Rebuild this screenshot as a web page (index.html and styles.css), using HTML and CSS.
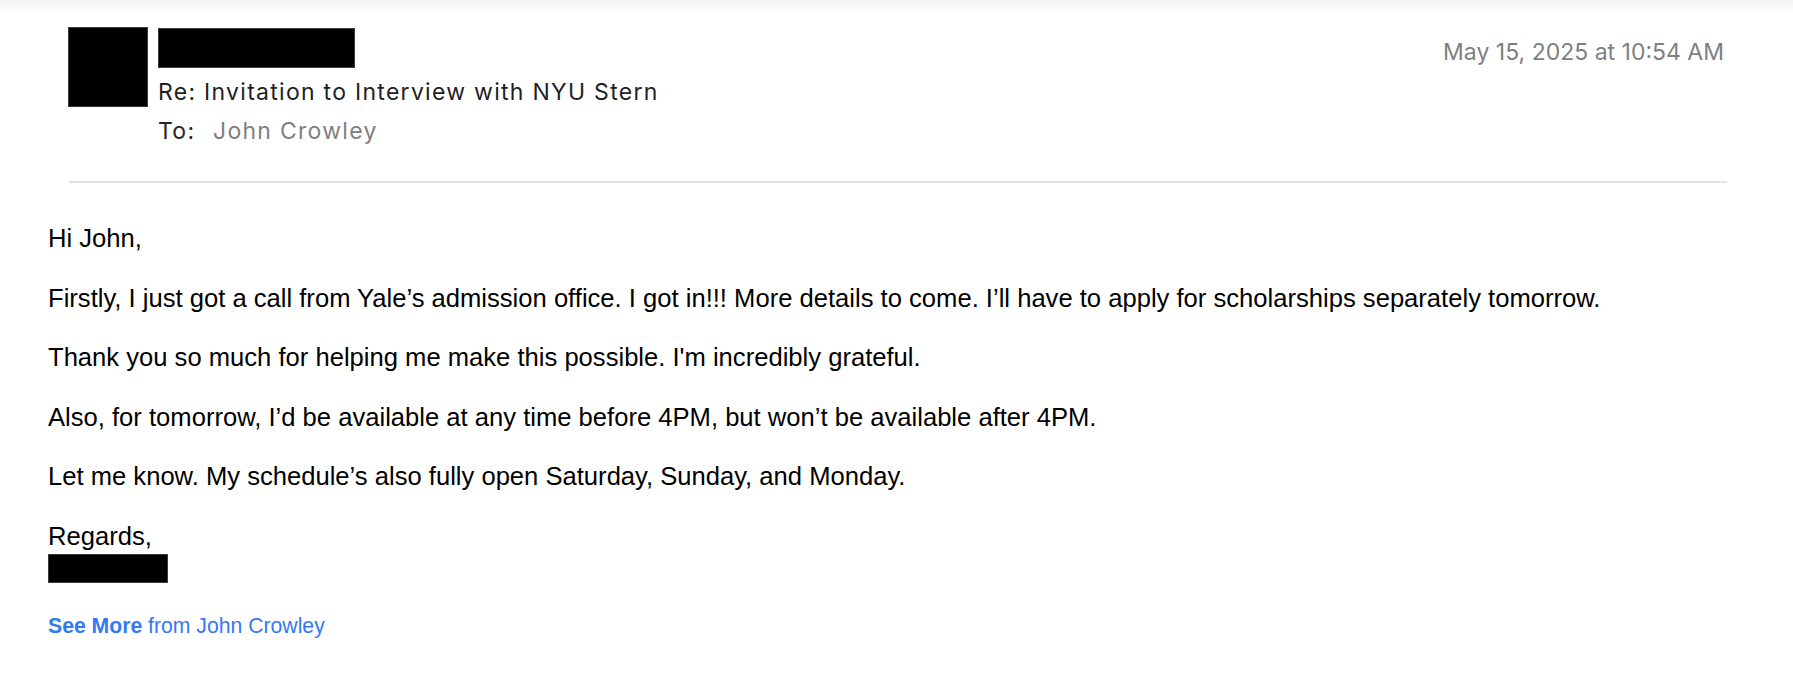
FILE: index.html
```html
<!DOCTYPE html>
<html>
<head>
<meta charset="utf-8">
<title>Re: Invitation to Interview with NYU Stern</title>
<link rel="stylesheet" href="styles.css">
</head>
<body>
<div class="topband"></div>
<header class="hdr">
  <div class="avatar"></div>
  <div class="meta">
    <div class="redact name"></div>
    <div class="subject">Re: Invitation to Interview with NYU Stern</div>
    <div class="to"><span class="lbl">To:</span><span class="rcpt">John Crowley</span></div>
  </div>
  <div class="date">May 15, 2025 at 10:54 AM</div>
</header>
<div class="sep"></div>
<main class="msg">
  <p>Hi John,</p>
  <p>Firstly, I just got a call from Yale’s admission office. I got in!!! More details to come. I’ll have to apply for scholarships separately tomorrow.</p>
  <p>Thank you so much for helping me make this possible. I'm incredibly grateful.</p>
  <p>Also, for tomorrow, I’d be available at any time before 4PM, but won’t be available after 4PM.</p>
  <p>Let me know. My schedule’s also fully open Saturday, Sunday, and Monday.</p>
  <div class="sign">
    <div class="regards">Regards,</div>
    <div class="redact signame"></div>
  </div>
  <div class="more"><span class="more-b">See More</span> from John Crowley</div>
</main>
</body>
</html>
```
FILE: styles.css
```css
html, body {
  margin: 0;
  padding: 0;
  background: #ffffff;
}
body {
  width: 1793px;
  height: 680px;
  overflow: hidden;
}
.topband {
  height: 13px;
  background: linear-gradient(#f4f4f4, #fafafa 70%, #ffffff);
}
.hdr {
  display: flex;
  align-items: flex-start;
  padding: 14px 69px 0 68px;
  font-family: Inter, "Liberation Sans", sans-serif;
  font-size: 23px;
  line-height: 30px;
  letter-spacing: 1.28px;
}
.avatar {
  width: 80px;
  height: 80px;
  background: #000;
  box-shadow: inset 0 0 0 1px #3a3a3a;
  flex: none;
}
.meta {
  margin-left: 10px;
  display: flex;
  flex-direction: column;
}
.redact {
  background: #000;
  box-shadow: inset 0 0 0 1px #3a3a3a;
}
.name {
  width: 197px;
  height: 40px;
  margin-top: 1px;
  margin-bottom: 9px;
}
.subject {
  color: #1f1f1f;
  margin-bottom: 9px;
  white-space: nowrap;
}
.to {
  white-space: nowrap;
}
.lbl {
  color: #262626;
  display: inline-block;
  width: 55px;
}
.rcpt {
  color: #808080;
}
.date {
  margin-left: auto;
  padding-top: 10px;
  color: #7f7f7f;
  letter-spacing: 0;
  white-space: nowrap;
}
.sep {
  height: 2px;
  background: #e2e2e2;
  margin: 35px 66px 0 69px;
}
.msg {
  padding: 41px 0 0 48px;
  font-family: "Liberation Sans", Arial, sans-serif;
  font-size: 25.6px;
  line-height: 29.8px;
  color: #000;
}
.msg p {
  margin: 0 0 29.8px 0;
  white-space: nowrap;
}
.signame {
  width: 120px;
  height: 29.5px;
  margin-top: 2px;
}
.more {
  margin-top: 31px;
  font-size: 21.2px;
  line-height: 24px;
  color: #3478f6;
}
.more-b {
  font-weight: bold;
}
```
